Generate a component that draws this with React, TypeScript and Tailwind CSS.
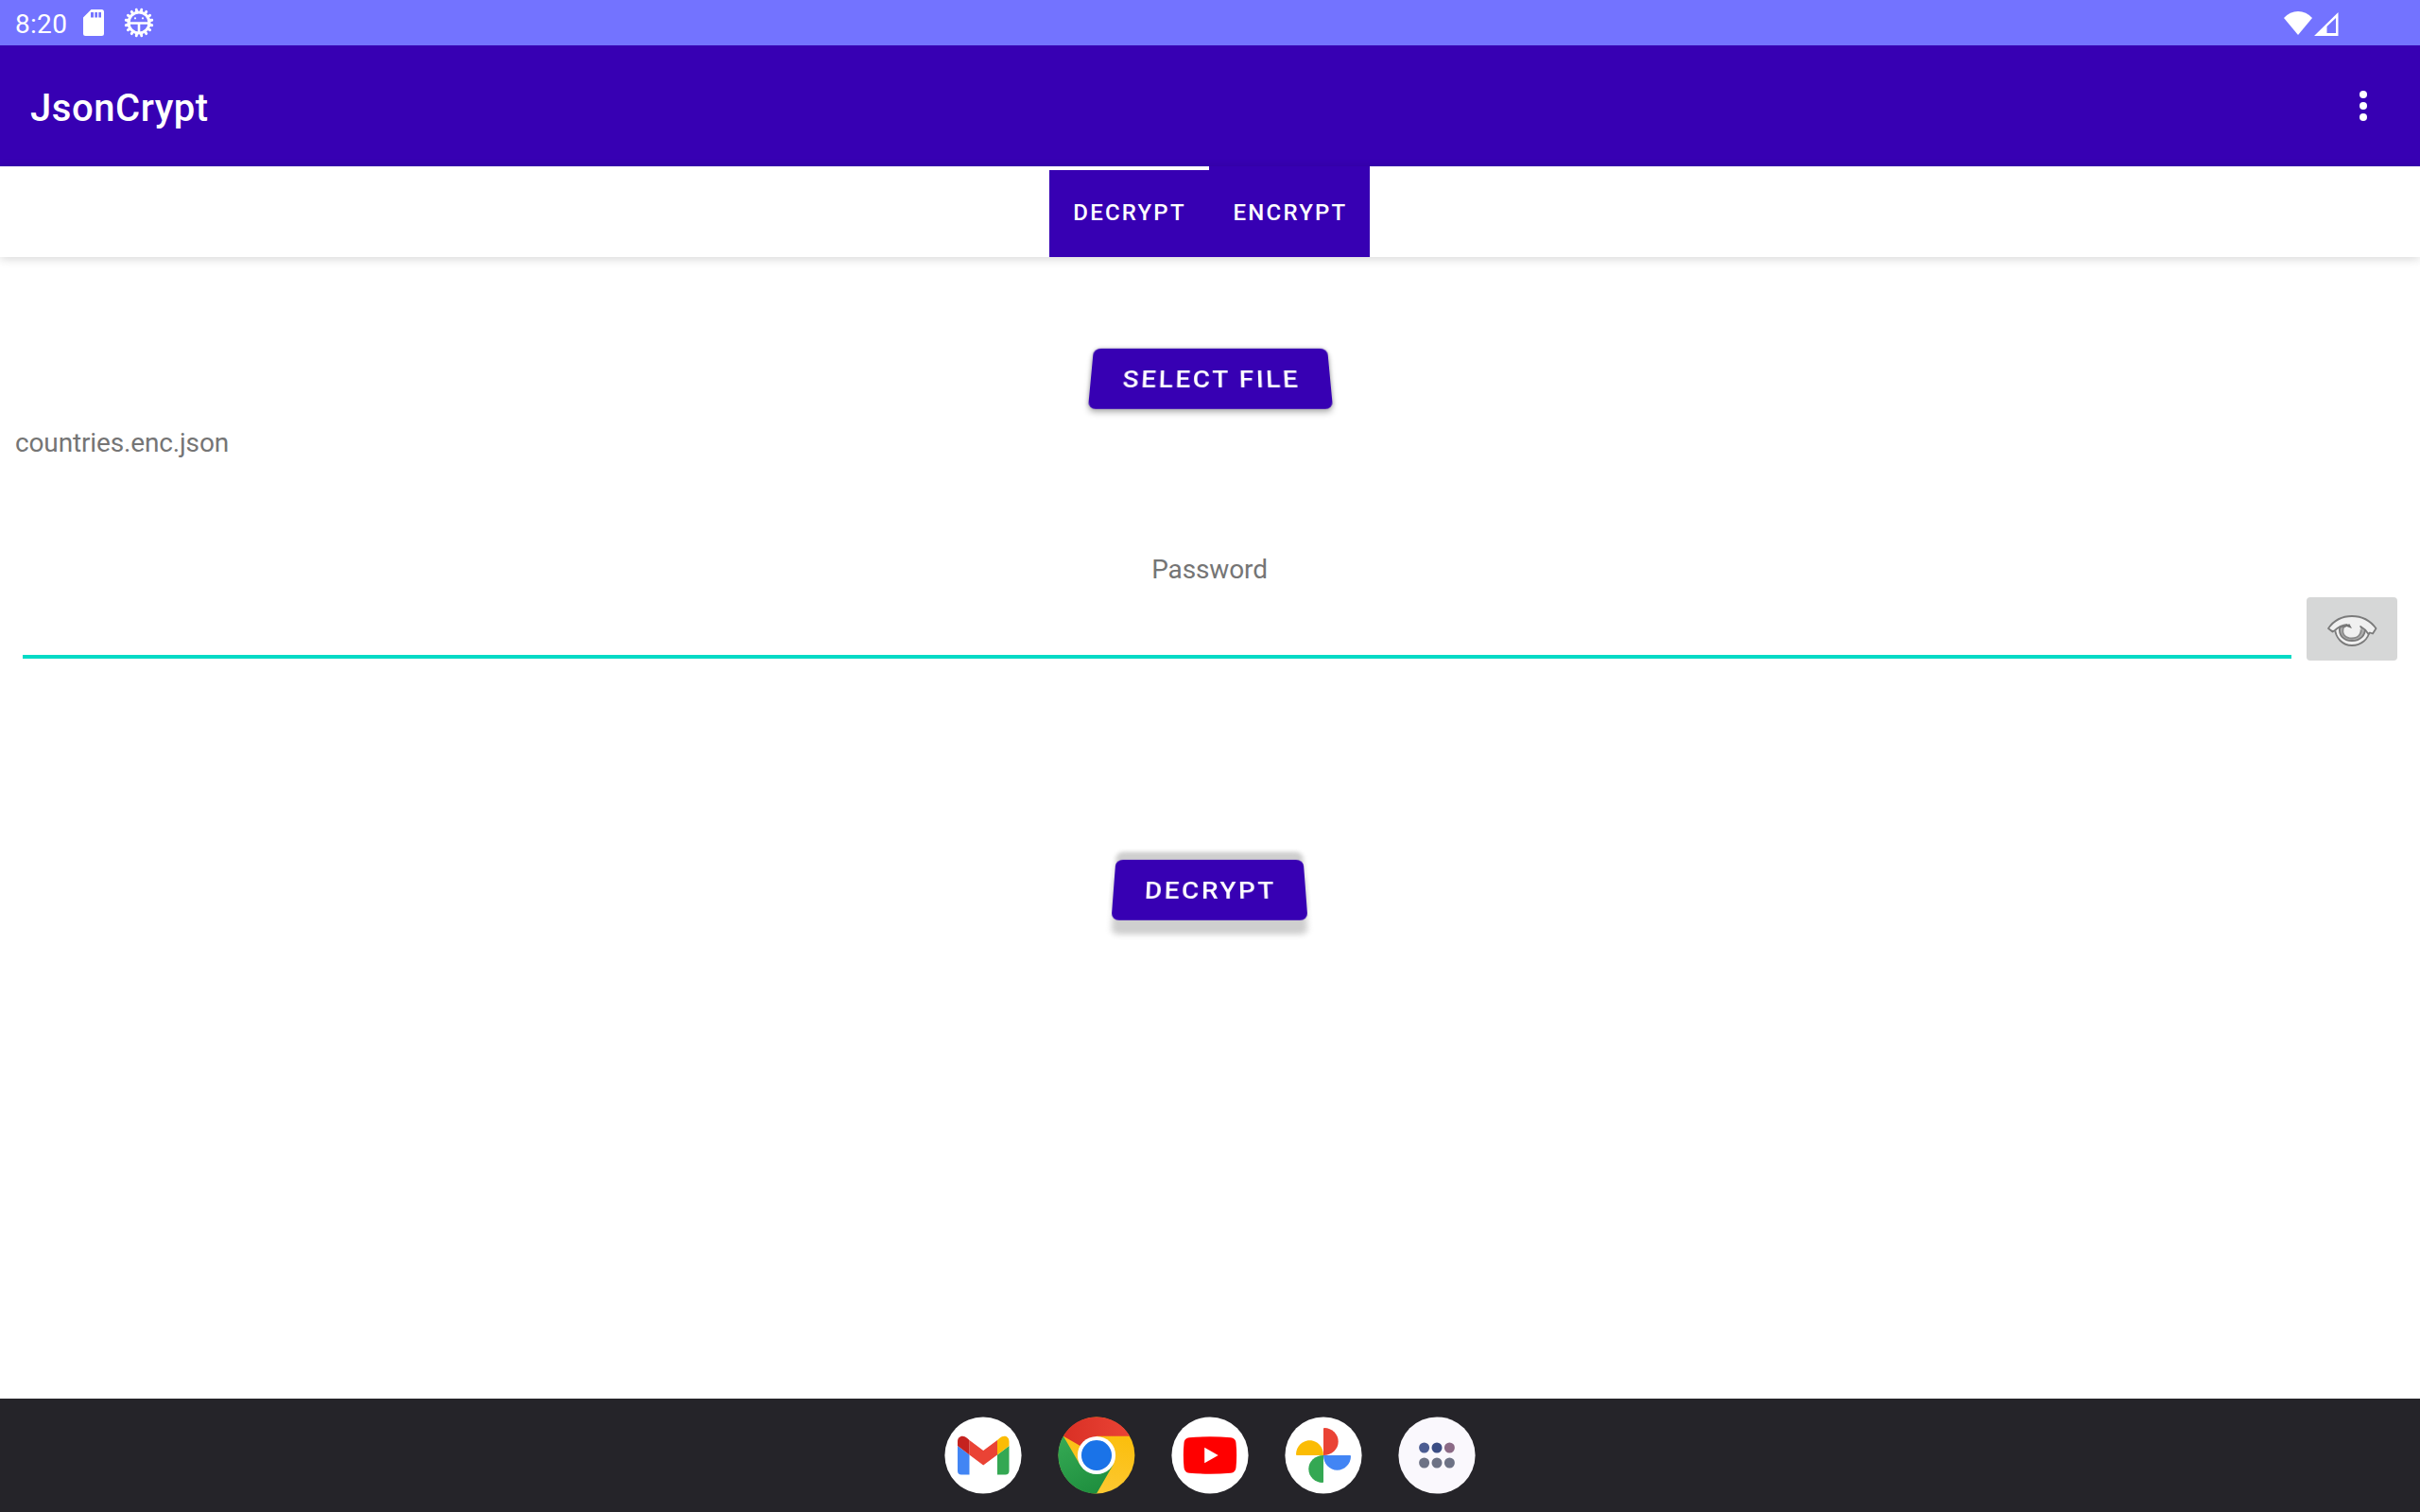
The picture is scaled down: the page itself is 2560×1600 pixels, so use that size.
import type { ReactNode } from 'react';

function SdCardIcon() {
  return (
    <svg className="h-7 w-[22px]" viewBox="0 0 22 28" fill="#fff">
      <path
        fillRule="evenodd"
        d="M8.500 0H19.500Q22 0 22 2.500V25.500Q22 28 19.500 28H2.500Q0 28 0 25.500V8.500ZM8 3V8.500H11V3ZM12.300 3V8.500H15V3ZM16.300 3V8.500H19V3Z"
      />
    </svg>
  );
}

function DebugIcon() {
  const teeth = Array.from({ length: 16 }, (_, i) => i * 22.5 + 11.25);
  return (
    <svg className="h-8 w-8" viewBox="-16 -16 32 32" fill="none" stroke="#fff">
      <circle r="11" strokeWidth="3.100" />
      {teeth.map((a) => (
        <path key={a} d="M0 -11.500V-14" strokeWidth="2.900" strokeLinecap="round" transform={`rotate(${a})`} />
      ))}
      <path d="M-11 0.500H11M0 0.500V11" strokeWidth="2.600" />
      <circle cx="-4" cy="-4.700" r="1.100" fill="#fff" stroke="none" />
      <circle cx="4" cy="-4.700" r="1.100" fill="#fff" stroke="none" />
    </svg>
  );
}

function WifiIcon() {
  return (
    <svg className="h-[25px] w-[30px]" viewBox="0 0 30 25" fill="#fff">
      <path d="M0 7Q6.500 0 15 0T30 7L15 25Z" />
    </svg>
  );
}

function SignalIcon() {
  return (
    <svg className="h-[25px] w-[26px]" viewBox="0 0 26 25" fill="#fff">
      <path fillRule="evenodd" d="M25.500 0V25H0ZM23 6L13.500 15V22H23Z" />
    </svg>
  );
}

function EyeIcon() {
  return (
    <svg className="h-9 w-[54px]" viewBox="0 0 54 36" fill="#f0f0f0" stroke="#7b7b7b" strokeWidth="1.800" strokeLinejoin="round">
      <path d="M9 16C9.500 26 17 34 27 34S44.500 27 45.500 19L41 14L14 14Z" />
      <path d="M14 15.500C13 23 18 29 27 29S41.500 23 41 15.500L36 13L16 14Z" fill="#b0b0b0" />
      <path d="M18 15C15.500 22 20 26.500 27 26.500S38.500 21 36 13.500L26 10L22.500 12Z" stroke="#8a8a8a" />
      <path d="M2 16Q11 3 27 3T52.500 16L49 21.500L46 20.500L44.500 22Q41 16.500 35.500 13.500L37 18Q31 11 22 11.500Q13 14 9 19L6.500 17.500Z" stroke="none" />
      <path d="M35.500 13.500Q41 16.500 44.500 22L46 20.500L49 21.500L52.500 16Q43 3 27 3T2 16L6.500 19.500L9 18Q14 13 22 12" fill="none" />
      <path d="M16.500 15Q20 12.500 24.500 11.500L27 16L21.500 14Z" fill="#707070" stroke="none" />
    </svg>
  );
}

function GmailIcon() {
  return (
    <svg className="size-[82px]" viewBox="0 0 82 82">
      <circle cx="41" cy="41" r="40.600" fill="#fff" />
      <path d="M14 31L26.500 40.500V61.500H18Q14 61.500 14 57.500Z" fill="#4285f4" />
      <path d="M68.500 31L56 40.500V61.500H64.500Q68.500 61.500 68.500 57.500Z" fill="#34a853" />
      <path d="M26.500 25L41.200 36L56 25V40.500L41.200 51.500L26.500 40.500Z" fill="#ea4335" />
      <path d="M14 31V26.500C14 20.500 20 19 24 22.800L26.500 25V40.500Z" fill="#c5221f" />
      <path d="M68.500 31V26.500C68.500 20.500 62.500 19 58.500 22.800L56 25V40.500Z" fill="#fbbc04" />
    </svg>
  );
}

function ChromeIcon() {
  return (
    <svg className="size-[82px]" viewBox="-41.400 -41.400 82.800 82.800">
      <defs>
        <linearGradient id="chrome-red" x1="0" x2="1">
          <stop offset="0" stopColor="#d93025" />
          <stop offset="1" stopColor="#ea4335" />
        </linearGradient>
        <linearGradient id="chrome-yellow" x1="0.300" y1="1" x2="0.500" y2="0">
          <stop offset="0" stopColor="#fcc934" />
          <stop offset="1" stopColor="#fbbc04" />
        </linearGradient>
        <linearGradient id="chrome-green" x1="0.700" y1="1" x2="0.200" y2="0">
          <stop offset="0" stopColor="#1e8e3e" />
          <stop offset="1" stopColor="#34a853" />
        </linearGradient>
      </defs>
      <circle r="40.800" fill="url(#chrome-yellow)" />
      <path d="M0 0L-35.500 -20.500A41 41 0 0 1 35.500 -20.500H0Z" fill="url(#chrome-red)" />
      <path d="M-35.500 -20.500A41 41 0 0 0 0 41L17.700 10L0 0L-17.700 10Z" fill="url(#chrome-green)" />
      <circle r="20.300" fill="#fff" />
      <circle r="16.200" fill="#1a73e8" />
    </svg>
  );
}

function YoutubeIcon() {
  return (
    <svg className="size-[82px]" viewBox="-41 -41 82 82">
      <circle r="40.600" fill="#fff" />
      <path d="M-22 -18.800Q0 -20.500 22 -18.800Q27 -18.300 27.500 -13Q28.800 0 27.500 13Q27 18.300 22 18.800Q0 20.500 -22 18.800Q-27 18.300 -27.500 13Q-28.800 0 -27.500 -13Q-27 -18.300 -22 -18.800Z" fill="#f00" />
      <path d="M-5.800 -8.300L8.700 0L-5.800 8.300Z" fill="#fff" />
    </svg>
  );
}

function PhotosIcon() {
  return (
    <svg className="size-[82px]" viewBox="-41 -41 82 82">
      <circle r="40.600" fill="#fff" />
      <path d="M0 0V-28Q0 -29 1 -29C9 -29 15.700 -22.500 15.700 -14.500S9 0 0 0Z" fill="#ea4335" />
      <path d="M0 0H28Q29 0 29 1C29 9 22.500 15.700 14.500 15.700S0 9 0 0Z" fill="#4285f4" />
      <path d="M0 0V28Q0 29 -1 29C-9 29 -15.700 22.500 -15.700 14.500S-9 0 0 0Z" fill="#34a853" />
      <path d="M0 0H-28Q-29 0 -29 -1C-29 -9 -22.500 -15.700 -14.500 -15.700S0 -9 0 0Z" fill="#fbbc04" />
    </svg>
  );
}

function AllAppsIcon() {
  return (
    <svg className="size-[82px]" viewBox="-41 -41 82 82">
      <circle r="40.600" fill="#faf8fd" />
      <circle cx="-13.400" cy="-8" r="5.500" fill="#4b5c92" />
      <circle cx="0" cy="-8" r="5.500" fill="#3b4d84" />
      <circle cx="13.400" cy="-8" r="5.500" fill="#8b6a86" />
      <circle cx="-13.400" cy="8" r="5.500" fill="#6d7285" />
      <circle cx="0" cy="8" r="5.500" fill="#6d7285" />
      <circle cx="13.400" cy="8" r="5.500" fill="#6d7285" />
    </svg>
  );
}

function TiltedButton({ className, children }: { className: string; children: ReactNode }) {
  return (
    <button
      className={`flex h-[72px] items-center justify-center rounded-lg bg-[#3700b3] pt-1 pl-[2px] text-[28px] font-medium tracking-[2.550px] whitespace-nowrap text-white [transform:perspective(690px)_rotateX(27.300deg)] ${className}`}
    >
      {children}
    </button>
  );
}

export default function App() {
  return (
    <div className="flex h-[1600px] w-[2560px] flex-col overflow-hidden bg-white font-[Roboto,sans-serif]">
      <header className="flex h-12 shrink-0 items-center bg-[#7373ff] pr-[86px] pl-4 text-white">
        <span className="w-[72px] pt-[3px] text-[28px] leading-8 tracking-[0.300px]">8:20</span>
        <SdCardIcon />
        <div className="ml-[21px]">
          <DebugIcon />
        </div>
        <div className="ml-auto flex items-center gap-[2px]">
          <WifiIcon />
          <div className="pt-[2px]">
            <SignalIcon />
          </div>
        </div>
      </header>

      <div className="flex h-32 shrink-0 items-center justify-between bg-[#3700b3] pr-14 pl-8 text-white">
        <h1 className="pt-[6px] text-[40px] leading-[48px] font-medium tracking-[0.550px]">JsonCrypt</h1>
        <button className="flex flex-col gap-1">
          <span className="size-2 rounded-full bg-white" />
          <span className="size-2 rounded-full bg-white" />
          <span className="size-2 rounded-full bg-white" />
        </button>
      </div>

      <nav className="flex h-24 shrink-0 justify-center pr-px text-[24px] font-medium tracking-[2.200px] text-white shadow-[0_2px_10px_rgba(0,0,0,0.160)]">
        <button className="flex w-[169px] items-center justify-center border-t-4 border-white bg-[#3700b3] pb-[2px] pl-px">
          DECRYPT
        </button>
        <button className="flex w-[170px] items-center justify-center bg-[#3700b3] pt-[2px] pl-[2px]">ENCRYPT</button>
      </nav>

      <main className="flex grow flex-col items-center text-[28px] leading-8 text-[#757575]">
        <TiltedButton className="mt-[92px] w-[253px] shadow-[0_5px_6px_rgba(0,0,0,0.220),0_0_5px_rgba(0,0,0,0.250)]">
          SELECT FILE
        </TiltedButton>
        <p className="mt-[17px] w-full pl-4 tracking-[-0.140px]">countries.enc.json</p>
        <label htmlFor="password" className="mt-[102px] mr-px tracking-[-0.120px]">
          Password
        </label>
        <div className="mt-[13px] flex h-[67px] w-full gap-4 pr-6 pl-6">
          <input id="password" type="password" className="h-[65px] grow border-b-4 border-[#03dac5] outline-none" />
          <button className="flex w-24 items-center justify-center rounded bg-[#d6d7d7] pt-[3px]">
            <EyeIcon />
          </button>
        </div>
        <TiltedButton className="mt-[206px] mr-[2px] w-[203px] shadow-[0_17px_6px_-1px_#cfcfcf,0_-10px_5px_0px_#cfcfcf]">
          DECRYPT
        </TiltedButton>
      </main>

      <footer className="flex h-[120px] shrink-0 items-center justify-center gap-[38px] bg-[#252429]">
        <GmailIcon />
        <ChromeIcon />
        <YoutubeIcon />
        <PhotosIcon />
        <AllAppsIcon />
      </footer>
    </div>
  );
}
